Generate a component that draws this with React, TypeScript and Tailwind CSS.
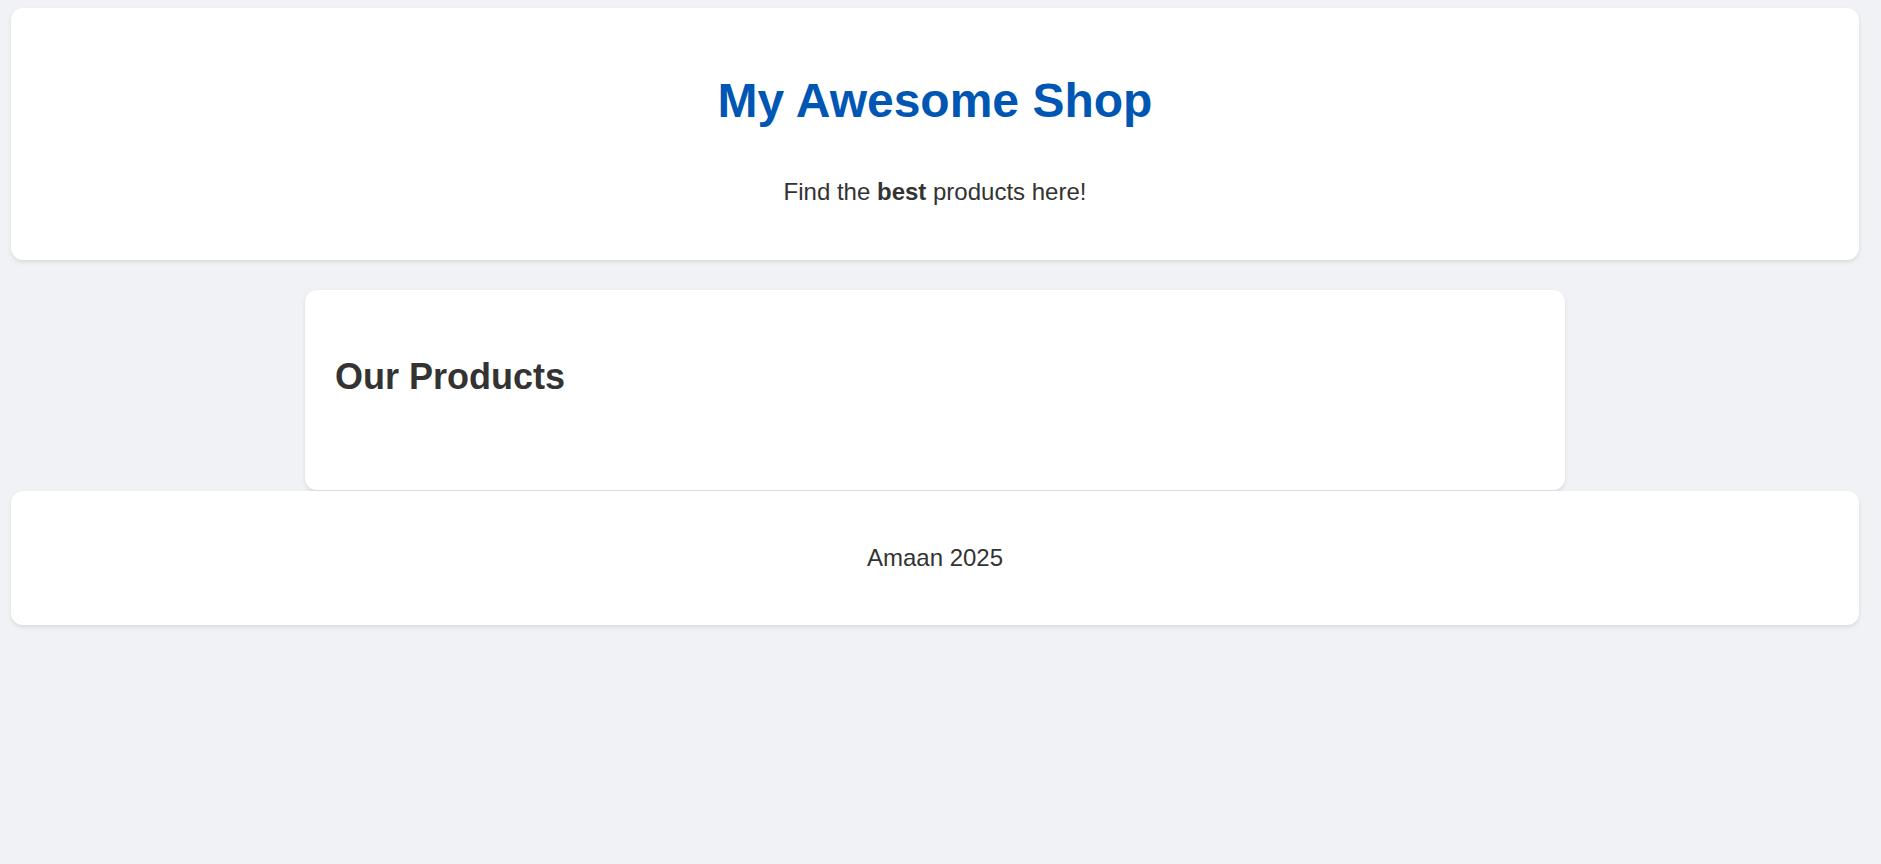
const font = { fontFamily: '"Liberation Sans", Arial, sans-serif' };

const App = () => {
  return (
    <div style={font} className="min-h-screen bg-[#f0f2f5] pl-[11px] pr-[22px] pt-[8px] text-[#333]">
      <header className="rounded-[12px] bg-white text-center shadow-[0_2px_4px_rgba(0,0,0,0.1)] h-[252px] pt-[65px]">
        <h1 className="text-[48px] font-bold leading-[55px] text-[#0056b3]">My Awesome Shop</h1>
        <p className="mt-[50px] text-[24px] leading-[28px]">
          Find the <strong className="font-bold">best</strong> products here!
        </p>
      </header>

      <main className="mx-auto mt-[30px] h-[200px] w-[1260px] rounded-[12px] bg-white px-[30px] pt-[66px] shadow-[0_2px_4px_rgba(0,0,0,0.1)]">
        <h2 className="text-[36px] font-bold leading-[41px]">Our Products</h2>
        <div className="grid grid-cols-3 gap-6"></div>
      </main>

      <footer className="mt-[1px] flex h-[134px] items-center justify-center rounded-[12px] bg-white text-[24px] shadow-[0_2px_4px_rgba(0,0,0,0.1)]">
        <p className="leading-[28px]">Amaan 2025</p>
      </footer>
    </div>
  );
};

export default App;
